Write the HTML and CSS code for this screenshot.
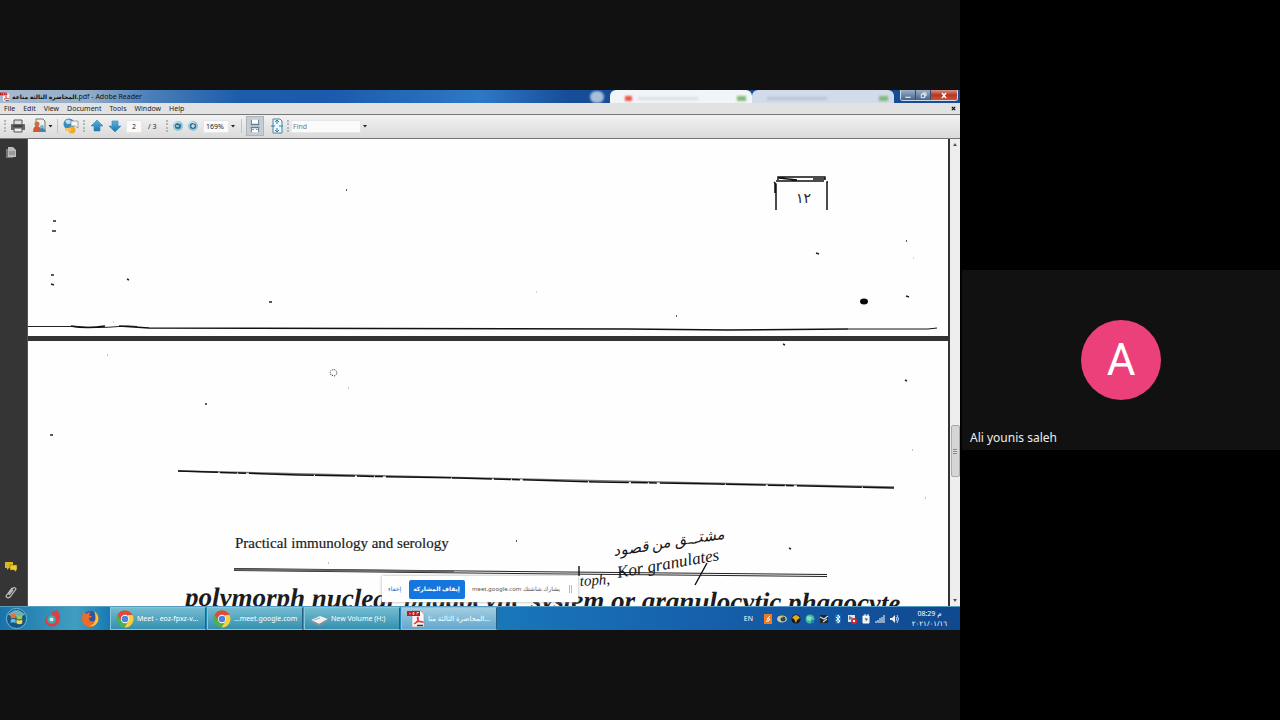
FILE: index.html
```html
<!DOCTYPE html>
<html lang="en">
<head>
<meta charset="utf-8">
<title>Meeting</title>
<link rel="stylesheet" href="styles.css">
</head>
<body>
<svg class="defs" aria-hidden="true">
  <defs>
    <symbol id="chrome" viewBox="0 0 18 18">
      <circle cx="9" cy="9" r="8.5" fill="#4caf50"/>
      <path d="M1.6 4.8 5.4 11 9 5H16.500A8.500 8.500 0 0 0 1.600 4.800z" fill="#e2493b"/>
      <path d="M16.500 5A8.500 8.500 0 0 1 8.600 17.500L12.500 11 12 5z" fill="#fdcf3c"/>
      <circle cx="9" cy="9" r="4.200" fill="#fff"/><circle cx="9" cy="9" r="3.300" fill="#4a83e0"/>
    </symbol>
    <symbol id="pdf" viewBox="0 0 18 18">
      <path d="M5 1H14L17 4V17H5z" fill="#f6f6f6" stroke="#999" stroke-width=".6"/>
      <path d="M0 1H13V6H0z" fill="#c21a1a"/><path d="M3 2.500v2M6 2.500v2h1v-2zM10 4.500v-2h2" stroke="#fff" stroke-width=".7" fill="none"/>
      <path d="M7 14C10 12 12 9 11 7C9 8 12 13 16 12C13 10.500 9 12.500 7 14z" fill="none" stroke="#d33" stroke-width="1.200"/>
      <path d="M10 15.500h6" stroke="#333" stroke-width="1.500"/>
    </symbol>
    <linearGradient id="blue" x2="0" y2="1"><stop stop-color="#5db3df"/><stop offset="1" stop-color="#1875b0"/></linearGradient>
  </defs>
</svg>
<main class="call">
  <section class="stage" aria-label="Shared screen">
    <div class="screen">
      <header class="titlebar">
        <svg class="title-icon"><use href="#pdf"/></svg>
        <span class="title"><bdi>المحاضرة الثالثة مناعة</bdi>.pdf - Adobe Reader</span>
        <span class="glow"></span>
        <span class="ghost-dot"></span>
        <span class="ghost-tab"><i class="red"></i><i class="line"></i><i class="green"></i></span>
        <span class="ghost-tab dim"><i class="line"></i><i class="green"></i></span>
        <span class="window-buttons">
          <button aria-label="Minimize"><svg viewBox="0 0 16 11"><path d="M5 7h6v1H5z" fill="#fff"/></svg></button><button aria-label="Restore"><svg viewBox="0 0 16 11"><path d="M6 4h4v4H6zM8 4V2.500h3.500V6H10" fill="none" stroke="#fff"/></svg></button><button class="close" aria-label="Close"><svg viewBox="0 0 26 11"><path d="M11 3l4 5M15 3l-4 5" stroke="#fff" stroke-width="1.500"/></svg></button>
        </span>
      </header>
      <nav class="menubar">
        <button>File</button><button>Edit</button><button>View</button><button>Document</button><button>Tools</button><button>Window</button><button>Help</button>
        <button class="doc-close" aria-label="Close document"><svg viewBox="0 0 6 6"><path d="M1 1l4 4M5 1L1 5" stroke="#111" stroke-width="1.500"/></svg></button>
      </nav>
      <div class="toolbar">
        <i class="grip"></i>
        <button class="tool" aria-label="Print"><svg viewBox="0 0 16 16"><path d="M4 2h8v5H4z" fill="#ddd" stroke="#555"/><path d="M2 6h12q1 0 1 1v5H1V7q0-1 1-1z" fill="#65686b"/><path d="M3 8h10" stroke="#222"/><path d="M4 10h8v4H4z" fill="#eee" stroke="#555"/></svg></button>
        <button class="tool wide" aria-label="Share"><svg viewBox="0 0 22 16"><path d="M5 1h7l2 2v10H5z" fill="#eee" stroke="#777"/><circle cx="6" cy="6" r="2.500" fill="#c77238"/><path d="M2 14q0-6 4-6t4 6z" fill="#d9542f"/><circle cx="11" cy="9" r="2" fill="#74b5d5"/><path d="M8 14q0-4 3-4t4 4z" fill="#3e88ae"/><path d="M17.500 7h4l-2 2.500z" fill="#222"/></svg></button>
        <i class="rule"></i>
        <button class="tool globe" aria-label="Collaborate"><svg viewBox="0 0 18 16"><circle cx="7" cy="6" r="5.500" fill="#3a8dc1"/><path d="M3 3q4-3 6 0t-4 3z" fill="#bde1f1"/><path d="M9 3h7v7l-3-2H9z" fill="#f4f4f4" stroke="#888" stroke-width=".7"/><circle cx="10" cy="12" r="3.500" fill="#f3aa26"/><path d="M3 10h6v3H3z" fill="#f9c45b"/></svg></button>
        <i class="grip"></i>
        <button class="tool" aria-label="Previous page"><svg viewBox="0 0 16 16"><path d="M8 2l6 6h-3v5H5V8H2z" fill="url(#blue)" stroke="#3788b7" stroke-width=".6"/></svg></button>
        <button class="tool down" aria-label="Next page"><svg viewBox="0 0 16 16"><path d="M8 14l6-6h-3V3H5v5H2z" fill="url(#blue)" stroke="#3788b7" stroke-width=".6"/></svg></button>
        <input class="field page-field" aria-label="Page number" value="2"><span class="total">/ 3</span>
        <i class="grip"></i>
        <button class="tool zoom" aria-label="Zoom out"><svg viewBox="0 0 12 12"><circle cx="6" cy="6" r="5" fill="#8ec7db"/><circle cx="6" cy="6" r="3" fill="#2b7292"/><path d="M4 6h3" stroke="#fff"/><path d="M2 3.500q3-3 6 0" stroke="#d5edf4" fill="none"/></svg></button>
        <button class="tool zoom" aria-label="Zoom in"><svg viewBox="0 0 12 12"><circle cx="6" cy="6" r="5" fill="#8ec7db"/><circle cx="6" cy="6" r="3" fill="#2b6688"/><path d="M4 6h4M6 4v4" stroke="#fff"/><path d="M2 3.500q3-3 6 0" stroke="#d5edf4" fill="none"/></svg></button>
        <input class="field zoom-field" aria-label="Zoom" value="169%">
        <button class="drop" aria-label="Zoom levels"><svg viewBox="0 0 6 6"><path d="M1 2h4L3 4.500z" fill="#222"/></svg></button>
        <i class="rule"></i>
        <button class="tool active" aria-label="Scrolling pages"><svg viewBox="0 0 18 18"><path d="M5 2v5h8V2M5 16v-5h8v5" fill="#fff" stroke="#527b93"/><path d="M4 7.500h10M4 10.500h10" stroke="#55798b"/><path d="M6 13h2M10 13h2" stroke="#2489bf"/></svg></button>
        <button class="tool fit" aria-label="Fit page"><svg viewBox="0 0 16 18"><path d="M4 2h7l2 2v12H4z" fill="#eef7fb" stroke="#568098"/><path d="M8 3v4M6 5l2-2 2 2M8 15v-4M6 13l2 2 2-2M2 9h4M14 9h-4" stroke="#2483b4" fill="none"/></svg></button>
        <i class="grip"></i>
        <input class="field find" aria-label="Find" placeholder="Find">
        <button class="drop" aria-label="Find options"><svg viewBox="0 0 6 6"><path d="M1 2h4L3 4.500z" fill="#222"/></svg></button>
      </div>
      <div class="reader">
        <aside class="rail">
          <button aria-label="Pages"><svg viewBox="0 0 14 14"><path d="M2 3h7v9H2z" fill="#777"/><path d="M4 1h5l3 3v7H4z" fill="#b9bbbd"/><path d="M5 6h6M5 8h6" stroke="#777"/></svg></button>
          <span class="space"></span>
          <button aria-label="Comments"><svg viewBox="0 0 14 14"><path d="M1 2h8v6H5l-2 2V8H1z" fill="#d9b71d"/><path d="M6 5h7v5h-1v2l-2-2H6z" fill="#edcb36" stroke="#66580e" stroke-width=".5"/></svg></button>
          <button aria-label="Attachments"><svg viewBox="0 0 14 14"><path d="M4 9l5-6q2-1 3 1L6 12q-3 2-4-1l6-8M5 10l4-5" fill="none" stroke="#c3c3c3" stroke-width="1.200"/></svg></button>
        </aside>
        <div class="pages">
          <article class="page first">
            <span class="page-number">١٢</span>
            <svg class="ink" viewBox="0 0 920 198">
              <path d="M748 71V45l-2-2M748 42h48M750 41v-3h47v3M751 39l18 2M785 40h12M799 71V43h1M747 44v10" fill="none" stroke="#111" stroke-width="1.500"/>
              <path d="M0 187.500h43q28 2 48 0 10-1 18 0" fill="none" stroke="#222" stroke-width="1"/>
              <path d="M43 187q17 3 34 0M91 187l30 2 479 1 100 1 120-1" fill="none" stroke="#111" stroke-width="1.600"/>
              <path d="M820 190l80 0 9-1" fill="none" stroke="#111"/>
              <path d="M25 82h3M24 92h4M23 136h3M23 145l3 1M99 140l2 1M241 163h3M788 114l3 1M878 157l3 1M878 102h1M318 51h1M648 177h1" stroke="#222" stroke-width="1.500"/>
              <path d="M508 153h1M885 119h1M85 183h1" stroke="#aaa"/>
              <ellipse cx="836" cy="162.500" rx="4" ry="3" fill="#080808"/>
            </svg>
          </article>
          <article class="page second">
            <h2>Practical immunology and serology</h2>
            <h1>polymorph nuclear phagocytic system or granulocytic phagocyte</h1>
            <svg class="ink" viewBox="0 0 920 265">
              <path d="M150 130l300 7 416 9" fill="none" stroke="#777" stroke-width="1.400"/>
              <path d="M150 130l120 4 160 3 140 4 120 2 176 4" fill="none" stroke="#111" stroke-width="1.500" stroke-dasharray="40 2 17 1 8 3 65 1"/>
              <path d="M206 227.500l280 3 313 3M206 229.500l280 3 313 3" fill="none" stroke="#222" stroke-width="1"/>
              <path d="M206 228.500l220 2" stroke="#666" stroke-width="2"/>
              <path d="M755 3l2 1M177 63h2M22 94h3M877 39l2 1M488 200h1M761 207l2 1" stroke="#222" stroke-width="1.500"/>
              <path d="M79 14h1M884 109h1M897 157h1M320 47h1M300 222h1" stroke="#888"/>
              <path d="M303 34q-2-4 1-5 3-1 4 1 2 2-1 5z" fill="none" stroke="#222" stroke-dasharray="1 1"/>
              <path d="M667 244l12-22M551 225v10" stroke="#111" stroke-width="1.400"/>
              <g class="handwriting"><text transform="translate(586 215) rotate(-9)" direction="ltr">مشتـــق من قصود</text><text transform="translate(552 245) rotate(-4)">toph,</text><text transform="translate(590 237) rotate(-10)" font-size="17">Kor granulates</text></g>
            </svg>
          </article>
        </div>
        <div class="scrollbar"><i class="arrow"></i><i class="thumb"></i><i class="arrow down-arrow"></i></div>
        <div class="share-bar" dir="rtl">
          <i class="handle"></i><span>يشارك شاشتك <bdi>meet.google.com</bdi></span><button class="stop">إيقاف المشاركة</button><a href="#">إخفاء</a>
        </div>
      </div>
      <footer class="taskbar">
        <button class="launcher start" aria-label="Start"><svg viewBox="0 0 24 24"><circle cx="12" cy="12" r="10.500" fill="#135784" stroke="#78bad7"/><path d="M3 8Q12-2 21 8 12 12 3 8z" fill="#6facbf"/><path d="M6 8q3-2 5 0v4q-3-1-5 0z" fill="#f0702d"/><path d="M12 8q3 2 6 0v4q-3 2-6 0z" fill="#9aca4a"/><path d="M6 13q3-1 5 0v4q-3-2-5 0z" fill="#60c5ee"/><path d="M12 13q3 2 6 0v4q-3 2-6 0z" fill="#fad64d"/></svg></button>
        <button class="launcher" aria-label="Browser"><svg viewBox="0 0 20 20"><path d="M10 3q5-1 4-3 6 7 3 14-4 6-11 4-6-4-2-10 2 1 3 3z" fill="#de3d43"/><circle cx="9" cy="11" r="4.500" fill="#33aeb1"/><circle cx="9" cy="11" r="2" fill="#d5e8dc"/></svg></button>
        <button class="launcher" aria-label="Firefox"><svg viewBox="0 0 20 20"><circle cx="10" cy="10" r="8" fill="#34549d"/><path d="M2 3q2 2 4 2 2-2 4-1-2 2-1 3l3 1-4 2q2 5 7 2 3-4 0-9 5 4 3 10-3 7-10 6-7-2-7-9z" fill="#f06b25"/><path d="M14 2q5 4 4 11-3 6-9 5 9-3 5-16z" fill="#fdc43a"/></svg></button>
        <button class="task"><svg><use href="#chrome"/></svg><span>Meet - eoz-fpxz-v...</span></button>
        <button class="task"><svg><use href="#chrome"/></svg><span>...meet.google.com</span></button>
        <button class="task volume"><svg viewBox="0 0 18 18"><path d="M1 10l9-4 8 3-9 5z" fill="#efefef"/><path d="M1 10v2l8 4v-2zM9 14v2l9-5V9z" fill="#899298"/><path d="M4 10l6-2" stroke="#aaa"/></svg><span>New Volume (H:)</span></button>
        <button class="task current"><svg><use href="#pdf"/></svg><span dir="ltr">المحاضرة الثالثة منا...</span></button>
        <div class="tray">
          <span class="lang">EN</span>
          <svg viewBox="0 0 10 10"><path d="M1 0h8v10H1z" fill="#eb7b29"/><path d="M3 7q3 1 4-2L4 5l3-3" fill="none" stroke="#fff"/></svg>
          <svg viewBox="0 0 10 10"><ellipse cx="5" cy="5" rx="5" ry="3.500" fill="#c7ccb2"/><circle cx="6" cy="5" r="2.500" fill="#344646"/><path d="M1 3h5" stroke="#e8ca54"/></svg>
          <svg viewBox="0 0 10 10"><circle cx="5" cy="5" r="4.500" fill="#171714"/><path d="M1 4q4-6 8 0L6 6 5 9 3 5z" fill="#e3a724"/></svg>
          <svg viewBox="0 0 10 10"><circle cx="5" cy="5" r="4.500" fill="#3bbba0"/><path d="M2 2l5 1-1 4-4-1z" fill="#86dfb8"/><path d="M6 6h3v3H6z" fill="#267fbb"/></svg>
          <svg viewBox="0 0 10 10"><path d="M1 1h8v8H1z" fill="#1b2731"/><path d="M1 3l4 2 4-3M4 8l4-3" stroke="#d3dae0" stroke-width="1.200" fill="none"/></svg>
          <svg viewBox="0 0 10 10"><rect x="2" width="6" height="10" rx="3" fill="#1677c8"/><path d="M3 3l4 4-2 2V1l2 2-4 4" fill="none" stroke="#fff"/></svg>
          <svg viewBox="0 0 10 10"><path d="M1 1h7v7H1z" fill="#e6e5e8"/><path d="M2 2l4 2-4 2z" fill="#5778a2"/><circle cx="7" cy="7" r="3" fill="#d72929"/><path d="M6 6l2 2M8 6L6 8" stroke="#fff"/></svg>
          <svg viewBox="0 0 10 10"><path d="M2 2h6v7H2zM4 0v3M7 0v3" fill="#eee" stroke="#fff"/><path d="M4 4l3 1-2 2z" fill="#355e91"/></svg>
          <svg viewBox="0 0 10 10"><path d="M1 9V7M3 9V6M5 9V4M7 9V3M9 9V1" stroke="#fff"/></svg>
          <svg viewBox="0 0 10 10"><path d="M1 4h2l3-3v8L3 6H1z" fill="#eee"/><path d="M7 3q2 2 0 4M8 1q3 4 0 8" fill="none" stroke="#bcdef3"/></svg>
        </div>
        <time class="clock"><span dir="ltr">08:29 م</span><span dir="ltr">٢٠٢١/٠١/١٦</span></time>
      </footer>
    </div>
  </section>
  <aside class="people">
    <div class="participant"><span class="avatar">A</span><span class="name">Ali younis saleh</span></div>
  </aside>
</main>
</body>
</html>
```

FILE: styles.css
```css
* { box-sizing: border-box; }
body { margin: 0; background: #111; font-family: "Noto Sans", "Open Sans", "DejaVu Sans", sans-serif; }
button, input { font: inherit; color: inherit; border: 0; padding: 0; background: none; min-width: 0; }
button { display: flex; align-items: center; justify-content: center; }
svg { display: block; overflow: visible; }
.defs { position: absolute; width: 0; height: 0; }
.call { display: grid; grid-template-columns: 3fr 1fr; min-height: 100vh; }
.stage { display: flex; align-items: center; min-width: 0; background: #111; }
.screen { width: 100%; aspect-ratio: 16 / 9; display: flex; flex-direction: column; font-size: 7px; color: #222; background: #e2e2e2; overflow: hidden; }

.titlebar { display: flex; align-items: center; flex: 0 0 13px; overflow: hidden; background: radial-gradient(ellipse at 205px 14px, #8fb7aa 0, transparent 24px), radial-gradient(ellipse at 295px 14px, #d6e6f5 0, transparent 13px), linear-gradient(90deg, #a7bbd2 0, #91acc8 90px, #4a7fb8 150px, #1b5dab 240px, #1b5aae 330px, #2d79c6 480px, #164c98 570px); }
.title-icon { width: 10px; height: 10px; }
.title { padding-left: 2px; white-space: nowrap; color: #111; }
.title bdi { font-size: 6px; font-weight: 700; }
.glow { flex: 1; }
.ghost-dot { width: 14px; height: 12px; border-radius: 7px; background: #a9bfd9; filter: blur(1px); margin: 0 6px 0 0; }
.ghost-tab { display: flex; align-items: center; width: 142px; height: 13px; padding: 3px 6px 0 15px; border-radius: 6px 6px 0 0; background: #f2f5f7; }
.ghost-tab i { height: 5px; filter: blur(1px); }
.ghost-tab .red { width: 7px; background: #f05246; margin-right: 6px; }
.ghost-tab .line { width: 60px; background: #dddfe3; height: 3px; }
.ghost-tab .green { width: 9px; background: #82b978; margin-left: auto; }
.ghost-tab.dim { background: #d1dbea; }
.ghost-tab.dim .line { background: #b9c4d6; }
.window-buttons { display: flex; align-self: flex-start; height: 11px; margin: 0 2px 0 6px; border: 1px solid #d1dae6; border-top: 0; border-radius: 0 0 3px 3px; overflow: hidden; }
.window-buttons button { width: 15px; background: linear-gradient(#9aafc9, #47648b); border-right: 1px solid #394d69; }
.window-buttons .close { width: 26px; background: linear-gradient(#d79486, #b53621 50%, #d25435); border: 0; }
.window-buttons svg { width: 100%; height: 11px; }

.menubar { display: flex; align-items: center; gap: 8px; flex: 0 0 12px; padding: 0 4px; background: #e2e2e2; border-bottom: 1px solid #777; }
.menubar .doc-close { margin-left: auto; width: 5px; height: 5px; }
.doc-close svg { width: 5px; height: 5px; }
.toolbar { display: flex; align-items: center; flex: 0 0 24px; padding: 0 2px 1px; background: linear-gradient(#f2f2f2, #dadada); border-bottom: 1px solid #777; }
.grip { width: 2px; height: 12px; margin: 0 2px; border-left: 2px dotted #b5b5b5; }
.rule { width: 1px; height: 14px; margin: 0 4px; background: #c3c3c3; }
.tool { width: 16px; height: 16px; flex: none; }
.tool svg { width: 100%; height: 100%; }
.tool.wide { width: 22px; margin-left: 5px; }
.tool.globe { width: 18px; margin: 0 1px 0 0; }
.tool.zoom { width: 12px; height: 12px; margin-left: 3px; }
.tool.zoom + .field { margin-left: 4px; }
.tool.down { margin: 0 3px 0 2px; }
.tool.active { width: 18px; height: 20px; background: #c7ccd1; border: 1px solid #afb4b8; }
.tool.fit { width: 16px; height: 18px; margin: 0 0 0 5px; }
.grip + .tool { margin-left: 2px; }
.field { height: 13px; background: #fbfbfb; border: 1px solid #e6e6e6; color: #222; }
.page-field { width: 16px; padding-left: 5px; }
.total { width: 21px; padding-left: 6px; margin-right: 1px; }
.zoom-field { width: 26px; padding-left: 2px; }
.find { width: 70px; padding-left: 1px; }
.find::placeholder { color: #777; opacity: 1; }
.drop { width: 8px; height: 12px; }
.drop svg { width: 6px; height: 6px; }

.reader { position: relative; display: flex; flex: 1; min-height: 0; }
.rail { display: flex; flex-direction: column; align-items: center; width: 28px; padding: 7px 6px 7px 0; gap: 11px; background: #353535; border-right: 1px solid #555; }
.rail svg { width: 14px; height: 14px; }
.space { flex: 1; }
.pages { flex: 1; min-width: 0; display: flex; flex-direction: column; gap: 5px; background: #333; overflow: hidden; }
.page { position: relative; background: #fefefe; }
.first { flex: 0 0 197px; padding: 50px 137px 0 0; text-align: right; }
.second { flex: 1; padding: 192px 0 0 157px; font-family: "Liberation Serif", serif; color: #1c1c1c; }
.ink { position: absolute; inset: 0; width: 100%; height: auto; }
.page-number { font: 14px/18px "DejaVu Sans", sans-serif; }
.second h2 { margin: 0 0 30px 50px; font-size: 15px; line-height: 20px; font-weight: 400; -webkit-text-stroke: 0.2px #1c1c1c; }
.second h1 { margin: 0; font-size: 27px; line-height: 28px; font-style: italic; font-weight: 700; white-space: nowrap; transform: rotate(0.5deg); transform-origin: 0 50%; }
.handwriting { font: italic 15px "Liberation Serif", "DejaVu Sans", serif; fill: #151515; }
.scrollbar { display: flex; flex-direction: column; align-items: center; width: 12px; background: #eee; border-left: 2px solid #333; padding: 4px 0; }
.arrow { border: 2px solid transparent; border-top: 0; border-bottom: 3px solid #555; }
.thumb { width: 9px; height: 52px; margin-top: 279px; background: repeating-linear-gradient(#888 0 1px, #ddd 1px 2px) center / 4px 5px no-repeat, #d5d5d5; border: 1px solid #aaa; border-radius: 2px; }
.down-arrow { margin-top: auto; transform: rotate(180deg); }
.share-bar { position: absolute; left: 382px; bottom: 4px; display: flex; align-items: center; width: 196px; height: 26px; padding: 0 6px; background: #fff; box-shadow: 0 0 3px #aaa; white-space: nowrap; color: #555; font-size: 6px; }
.handle { width: 3px; height: 8px; border: 1px solid #bbb; border-width: 0 1px; margin-left: 9px; }
.stop { flex: none; width: 56px; height: 19px; margin: 0 auto; border-radius: 2px; background: #1676df; color: #fff; font-weight: 700; }
.share-bar a { color: #1762ad; text-decoration: none; }

.taskbar { display: flex; align-items: center; flex: 0 0 24px; background: linear-gradient(90deg, #1873aa 0, #409fc0 75px, #1879b3 110px, #3296bd 300px, #1977b8 500px, #1660ac 700px, #10488f); border-top: 1px solid #5c9cc4; color: #fff; }
.launcher { width: 37px; height: 23px; }
.launcher svg { width: 19px; height: 19px; }
.launcher.start { width: 33px; }
.start svg { width: 23px; height: 23px; }
.launcher.start + .launcher { width: 39px; }
.task { justify-content: flex-start; gap: 3px; width: 96px; height: 23px; padding: 0 5px; margin-left: 1px; background: linear-gradient(#73bcd0, #358fb0); border: 1px solid #85c6d9; border-right-color: #235f83; white-space: nowrap; }
.task svg { width: 18px; height: 18px; flex: none; }
.task.current { background: linear-gradient(#a2cee1, #62a7cf); }
.tray { display: flex; align-items: center; gap: 4px; margin-left: auto; }
.tray svg { width: 10px; height: 10px; }
.lang { margin-right: 6px; }
.clock { display: flex; flex-direction: column; align-items: center; width: 61px; line-height: 10px; }

.people { display: flex; align-items: center; min-width: 0; padding-left: 2px; background: #000; }
.participant { display: flex; flex-direction: column; align-items: center; width: 100%; aspect-ratio: 318 / 180; padding-top: 50px; background: #111; }
.avatar { display: grid; place-items: center; width: 80px; height: 80px; border-radius: 50%; background: #ec407a; color: #fff; font-family: Roboto, sans-serif; font-size: 44px; line-height: 80px; }
.name { align-self: flex-start; margin: auto 0 3px 8px; color: #eee; font-size: 12px; line-height: 18px; }
```
